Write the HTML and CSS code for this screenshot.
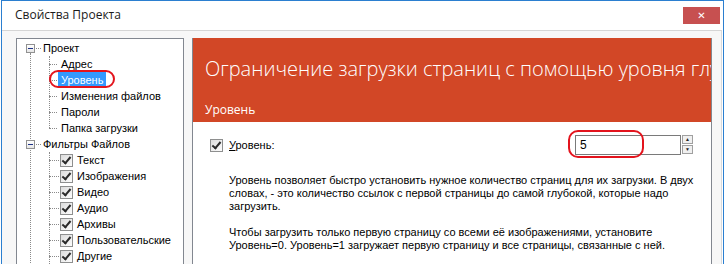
FILE: index.html
```html
<!DOCTYPE html>
<html lang="ru">
<head>
    <meta charset="UTF-8">
    <title>Свойства Проекта</title>
    <link rel="stylesheet" href="styles.css">
</head>
<body>
    <div class="window">
        <div class="titlebar">
            <span class="title">Свойства Проекта</span>
            <span class="close-btn">&#x2715;</span>
        </div>

        <div class="client">
            <!-- Tree of settings -->
            <div class="tree">
                <div class="vline root-line"></div>
                <div class="vline kids-1"></div>
                <div class="vline kids-2"></div>

                <div class="node root"><span class="expander"></span><span class="dots short"></span><span class="label">Проект</span></div>
                <div class="node child"><span class="dots"></span><span class="label">Адрес</span></div>
                <div class="node child"><span class="dots"></span><span class="label selected">Уровень</span></div>
                <div class="node child"><span class="dots"></span><span class="label">Изменения файлов</span></div>
                <div class="node child"><span class="dots"></span><span class="label">Пароли</span></div>
                <div class="node child"><span class="dots"></span><span class="label">Папка загрузки</span></div>

                <div class="node root"><span class="expander"></span><span class="dots short"></span><span class="label">Фильтры Файлов</span></div>
                <div class="node child"><span class="dots long"></span><span class="chk"></span><span class="label">Текст</span></div>
                <div class="node child"><span class="dots long"></span><span class="chk"></span><span class="label">Изображения</span></div>
                <div class="node child"><span class="dots long"></span><span class="chk"></span><span class="label">Видео</span></div>
                <div class="node child"><span class="dots long"></span><span class="chk"></span><span class="label">Аудио</span></div>
                <div class="node child"><span class="dots long"></span><span class="chk"></span><span class="label">Архивы</span></div>
                <div class="node child"><span class="dots long"></span><span class="chk"></span><span class="label">Пользовательские</span></div>
                <div class="node child"><span class="dots long"></span><span class="chk"></span><span class="label">Другие</span></div>

                <div class="mark mark-tree"></div>
            </div>

            <!-- Settings page -->
            <div class="panel">
                <div class="panel-head">
                    <div class="panel-title">Ограничение загрузки страниц с помощью уровня глубины ссылок</div>
                    <div class="panel-sub">Уровень</div>
                </div>
                <div class="panel-body">
                    <div class="level-row">
                        <span class="chk"></span>
                        <span class="level-label"><u>У</u>ровень:</span>
                        <div class="spin">
                            <div class="spin-input">5</div>
                            <div class="spin-btns">
                                <span class="spin-btn">&#9650;</span>
                                <span class="spin-btn">&#9660;</span>
                            </div>
                        </div>
                        <div class="mark mark-input"></div>
                    </div>
                    <p class="desc">Уровень позволяет быстро установить нужное количество страниц для их загрузки. В двух<br>словах, - это количество ссылок с первой страницы до самой глубокой, которые надо<br>загрузить.</p>
                    <p class="desc">Чтобы загрузить только первую страницу со всеми её изображениями, установите<br>Уровень=0. Уровень=1 загружает первую страницу и все страницы, связанные с ней.</p>
                </div>
            </div>
        </div>
    </div>
</body>
</html>
```

FILE: styles.css
```css
body {
    margin: 0;
    width: 727px;
    height: 264px;
    overflow: hidden;
    background: #fff;
    font-family: 'Liberation Sans', Arial, sans-serif;
    color: #000;
}
.window {
    margin-left: 1px;
    width: 721px;
    height: 300px;
    border: 1px solid #2b7fd0;
    border-bottom: none;
    background: #fff;
}
.titlebar {
    height: 29px;
    display: flex;
    justify-content: space-between;
    align-items: flex-start;
}
.title {
    font-family: 'Open Sans', 'Noto Sans', sans-serif;
    font-size: 12px;
    line-height: 18px;
    padding: 5px 0 0 13px;
    color: #1a1a1a;
}
.close-btn {
    width: 37px;
    height: 17px;
    margin: 6px 3px 0 0;
    background: #c75050;
    color: #fff;
    font-family: 'DejaVu Sans', sans-serif;
    font-size: 10px;
    font-weight: bold;
    line-height: 17px;
    text-align: center;
}
.client {
    display: flex;
    align-items: flex-start;
    height: 270px;
    width: 720px;
    box-sizing: border-box;
    padding: 7px 9px 0 14px;
    border-top: 1px solid #d5d5d5;
    border-right: 1px solid #dadada;
    background: #f7f7f7;
}

/* tree */
.tree {
    position: relative;
    width: 168px;
    height: 240px;
    flex-shrink: 0;
    box-sizing: border-box;
    border: 1px solid #828790;
    background: #fff;
    padding-top: 1px;
    font-size: 11px;
}
.node {
    height: 16px;
    display: flex;
    align-items: center;
    position: relative;
}
.expander {
    width: 7px;
    height: 7px;
    margin-left: 9px;
    border: 1px solid #919191;
    background: linear-gradient(#fff, #e6e6e6);
    position: relative;
}
.expander::after {
    content: '';
    position: absolute;
    left: 1px;
    top: 3px;
    width: 5px;
    height: 1px;
    background: #1e3287;
}
.dots {
    width: 8px;
    margin-left: 32px;
    margin-right: 1px;
    border-top: 1px dotted #8a8a8a;
}
.dots.long {
    width: 10px;
    margin-right: 1px;
}
.dots.short {
    width: 5px;
    margin-left: 1px;
    margin-right: 1px;
}
.child .chk {
    margin-right: 1px;
}
.label {
    padding: 0 3px;
    line-height: 16px;
    white-space: nowrap;
}
.label.selected {
    background: #3399ff;
    color: #fff;
}
.root .label {
    padding-left: 1px;
}
.vline {
    position: absolute;
    border-left: 1px dotted #8a8a8a;
}
.root-line { left: 13px; top: 14px; height: 230px; }
.kids-1 { left: 32px; top: 17px; height: 72px; }
.kids-2 { left: 32px; top: 113px; height: 128px; }

.chk {
    display: inline-block;
    flex-shrink: 0;
    width: 11px;
    height: 11px;
    border: 1px solid #8e8f8f;
    background: linear-gradient(135deg, #dcdcdc, #fdfdfd);
    position: relative;
}
.chk::after {
    content: '';
    position: absolute;
    left: 3px;
    top: 0px;
    width: 3px;
    height: 7px;
    border-right: 2px solid #2a2a2a;
    border-bottom: 2px solid #2a2a2a;
    transform: rotate(40deg);
}

/* red annotation marks */
.mark {
    position: absolute;
    border: 2px solid #e3141d;
    border-radius: 10px;
}
.mark-tree {
    left: 32px;
    top: 31px;
    width: 62px;
    height: 14px;
}
.mark-input {
    left: 358px;
    top: -5px;
    width: 72px;
    height: 24px;
}

/* right panel */
.panel {
    width: 520px;
    height: 240px;
    margin-left: 8px;
    flex-shrink: 0;
    box-sizing: border-box;
    border: 1px solid #828790;
    border-top: none;
    background: #fff;
    overflow: hidden;
}
.panel-head {
    background: #d24726;
    color: #fff;
    height: 84px;
    box-sizing: border-box;
    padding: 19px 0 0 12px;
    font-family: 'Open Sans', 'Noto Sans', sans-serif;
    white-space: nowrap;
}
.panel-title {
    font-size: 20px;
    font-weight: 300;
    line-height: 24px;
}
.panel-sub {
    margin-top: 21px;
    font-size: 12px;
    line-height: 16px;
}
.panel-body {
    padding: 16px 0 0 17px;
    font-size: 11px;
}
.level-row {
    position: relative;
    display: flex;
    align-items: center;
    height: 20px;
    margin-top: -3px;
    padding-right: 18px;
}
.level-label {
    margin-left: 6px;
    flex: 1;
    font-size: 11px;
}
.spin {
    display: flex;
    align-items: center;
}
.spin-input {
    width: 100px;
    height: 18px;
    border: 1px solid #7a7a7a;
    padding-left: 4px;
    font-size: 12px;
    line-height: 18px;
}
.spin-btns {
    display: flex;
    flex-direction: column;
    margin-left: 1px;
}
.spin-btn {
    width: 9px;
    height: 7px;
    margin: 0 0 1px;
    border: 1px solid #a0a0a0;
    background: #f0f0f0;
    font-size: 5px;
    line-height: 7px;
    text-align: center;
    color: #222;
}
.desc {
    margin: 19px 0 0 19px;
    font-size: 11px;
    line-height: 13px;
    white-space: nowrap;
}
.desc + .desc {
    margin-top: 13px;
}
```
